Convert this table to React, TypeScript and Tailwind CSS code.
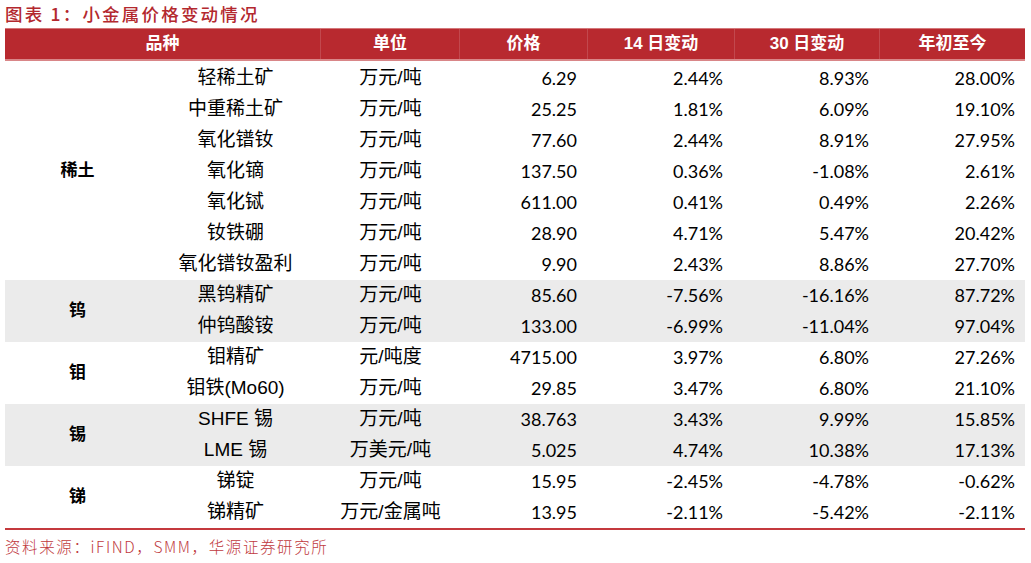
import React from "react";

type Row = { name: string; unit: string; price: string; d14: string; d30: string; ytd: string };
type Group = { label: string; gray: boolean; rows: Row[] };

const groups: Group[] = [
  {
    label: "稀土",
    gray: false,
    rows: [
      { name: "轻稀土矿", unit: "万元/吨", price: "6.29", d14: "2.44%", d30: "8.93%", ytd: "28.00%" },
      { name: "中重稀土矿", unit: "万元/吨", price: "25.25", d14: "1.81%", d30: "6.09%", ytd: "19.10%" },
      { name: "氧化镨钕", unit: "万元/吨", price: "77.60", d14: "2.44%", d30: "8.91%", ytd: "27.95%" },
      { name: "氧化镝", unit: "万元/吨", price: "137.50", d14: "0.36%", d30: "-1.08%", ytd: "2.61%" },
      { name: "氧化铽", unit: "万元/吨", price: "611.00", d14: "0.41%", d30: "0.49%", ytd: "2.26%" },
      { name: "钕铁硼", unit: "万元/吨", price: "28.90", d14: "4.71%", d30: "5.47%", ytd: "20.42%" },
      { name: "氧化镨钕盈利", unit: "万元/吨", price: "9.90", d14: "2.43%", d30: "8.86%", ytd: "27.70%" },
    ],
  },
  {
    label: "钨",
    gray: true,
    rows: [
      { name: "黑钨精矿", unit: "万元/吨", price: "85.60", d14: "-7.56%", d30: "-16.16%", ytd: "87.72%" },
      { name: "仲钨酸铵", unit: "万元/吨", price: "133.00", d14: "-6.99%", d30: "-11.04%", ytd: "97.04%" },
    ],
  },
  {
    label: "钼",
    gray: false,
    rows: [
      { name: "钼精矿", unit: "元/吨度", price: "4715.00", d14: "3.97%", d30: "6.80%", ytd: "27.26%" },
      { name: "钼铁(Mo60)", unit: "万元/吨", price: "29.85", d14: "3.47%", d30: "6.80%", ytd: "21.10%" },
    ],
  },
  {
    label: "锡",
    gray: true,
    rows: [
      { name: "SHFE 锡", unit: "万元/吨", price: "38.763", d14: "3.43%", d30: "9.99%", ytd: "15.85%" },
      { name: "LME 锡", unit: "万美元/吨", price: "5.025", d14: "4.74%", d30: "10.38%", ytd: "17.13%" },
    ],
  },
  {
    label: "锑",
    gray: false,
    rows: [
      { name: "锑锭", unit: "万元/吨", price: "15.95", d14: "-2.45%", d30: "-4.78%", ytd: "-0.62%" },
      { name: "锑精矿", unit: "万元/金属吨", price: "13.95", d14: "-2.11%", d30: "-5.42%", ytd: "-2.11%" },
    ],
  },
];

const cjk = "font-['Liberation_Sans','Noto_Sans_CJK_SC',sans-serif]";
const num = "font-['Lato','Liberation_Sans',sans-serif]";

export default function App() {
  return (
    <div className="w-[1031px] h-[563px] bg-white overflow-hidden">
      <div className="pl-[5px] pr-[6px]">
        <div className="h-[28px] flex items-center pb-[1px] font-['Noto_Sans_CJK_SC',sans-serif] font-medium text-[17.5px] tracking-[2.2px] text-[#b3282e] leading-none">
          图表 1：小金属价格变动情况
        </div>
        <div className={`grid grid-cols-[316px_139px_128px_147px_145px_145px] h-[33px] bg-[#b8292f] border-t border-[#d4777a] border-b-2 border-b-[#d98688] text-white font-bold text-[17px] ${cjk}`}>
          <div className="flex items-center justify-center border-r border-white/15">品种</div>
          <div className="flex items-center justify-center border-r border-white/15">单位</div>
          <div className="flex items-center justify-center border-r border-white/15">价格</div>
          <div className="flex items-center justify-center border-r border-white/15">14 日变动</div>
          <div className="flex items-center justify-center border-r border-white/15">30 日变动</div>
          <div className="flex items-center justify-center">年初至今</div>
        </div>
        <div className="pt-[2px] border-b-2 border-[#c4393d]">
          {groups.map((g) => (
            <div key={g.label} className={`flex ${g.gray ? "bg-[#ebebeb]" : "bg-white"}`}>
              <div className={`w-[145px] flex items-center justify-center pb-[1px] font-bold text-[17px] text-black ${cjk}`}>
                {g.label}
              </div>
              <div className="flex-1">
                {g.rows.map((r) => (
                  <div key={r.name} className="grid grid-cols-[171px_139px_128px_147px_145px_145px] h-[31px] pb-[1px] items-center text-black">
                    <div className={`text-center text-[19px] ${cjk}`}>{r.name}</div>
                    <div className={`text-center text-[19px] ${cjk}`}>{r.unit}</div>
                    <div className={`text-right pr-[11px] text-[18px] ${num}`}>{r.price}</div>
                    <div className={`text-right pr-[12px] text-[18px] ${num}`}>{r.d14}</div>
                    <div className={`text-right pr-[11px] text-[18px] ${num}`}>{r.d30}</div>
                    <div className={`text-right pr-[10px] text-[18px] ${num}`}>{r.ytd}</div>
                  </div>
                ))}
              </div>
            </div>
          ))}
        </div>
        <div className="h-[34px] flex items-center font-['Noto_Sans_CJK_SC',sans-serif] font-light text-[15.5px] tracking-[1.6px] text-[#c0393d]">
          资料来源：iFIND，SMM，华源证券研究所
        </div>
      </div>
    </div>
  );
}
